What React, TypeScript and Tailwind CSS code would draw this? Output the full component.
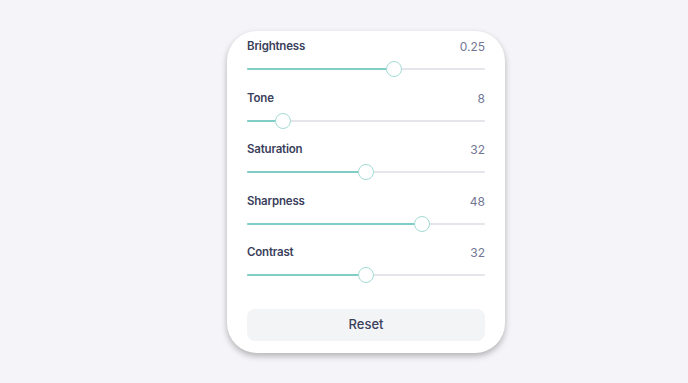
import React, { useState } from 'react';

interface SliderRowProps {
  label: string;
  value: number;
  min: number;
  max: number;
  display: string;
}

const SliderRow: React.FC<SliderRowProps> = ({ label, value, min, max, display }) => {
  const pct = ((value - min) / (max - min)) * 100;

  return (
    <div className="flex flex-col">
      <div className="flex items-center justify-between h-[18px]">
        <span className="text-[11.5px] font-semibold tracking-[-0.2px] text-[#3b3f5c]">{label}</span>
        <span className="text-[12px] text-[#737796]">{display}</span>
      </div>
      <div className="relative h-[16px] mt-[5px]">
        <div className="absolute left-0 right-0 top-[7px] h-[2px] rounded-full bg-[#e4e6ec]" />
        {/* fill and thumb ride a rail inset by half a thumb */}
        <div className="absolute left-[8px] right-[8px] top-0 h-full">
          <div
            className="absolute left-[-8px] top-[7px] h-[2px] rounded-full bg-[#80ccc7]"
            style={{ width: `calc(${pct}% + 8px)` }}
          />
          <div
            className="absolute top-0 w-[16px] h-[16px] -ml-[8px] rounded-full bg-white border-[1.5px] border-[#a3dbd5]"
            style={{ left: `${pct}%` }}
          />
        </div>
      </div>
    </div>
  );
};

const App: React.FC = () => {
  const [values] = useState([
    { label: 'Brightness', value: 0.25, min: -1, max: 1, display: '0.25' },
    { label: 'Tone', value: 8, min: 0, max: 64, display: '8' },
    { label: 'Saturation', value: 32, min: 0, max: 64, display: '32' },
    { label: 'Sharpness', value: 48, min: 0, max: 64, display: '48' },
    { label: 'Contrast', value: 32, min: 0, max: 64, display: '32' },
  ]);

  return (
    <div
      className="w-[688px] h-[383px] bg-[#f5f5f9] flex pl-[227px] pt-[31px]"
      style={{ fontFamily: 'Inter, "Noto Sans", sans-serif' }}
    >
      <div className="w-[278px] h-[322px] bg-white rounded-[30px] shadow-[0_3px_6px_rgba(0,0,0,0.28)] px-[20px] pt-[7px] flex flex-col">
        <div className="flex flex-col gap-[12.5px]">
          {values.map((v) => (
            <SliderRow key={v.label} {...v} />
          ))}
        </div>
        <button className="mt-[26px] h-[32px] w-full rounded-[8px] bg-[#f3f4f6] text-[13px] font-medium text-[#3b3f5c]">
          Reset
        </button>
      </div>
    </div>
  );
};

export default App;
